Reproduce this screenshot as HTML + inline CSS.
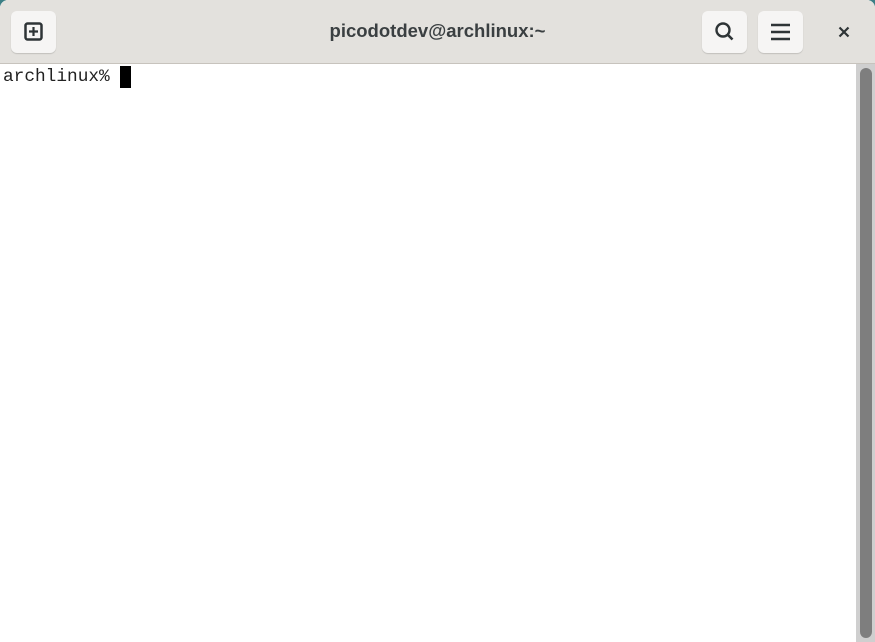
<html><head><style>
body{margin:0;width:875px;height:642px;overflow:hidden;background:#3c7f86;font-family:"Liberation Sans",sans-serif;position:relative}
.win{position:absolute;left:0;top:0;width:875px;height:642px;border-radius:8px 8px 0 0;overflow:hidden;background:#fff}
.hdr{position:absolute;left:0;top:0;width:875px;height:63px;background:#e3e1dd;border-bottom:1px solid #c7c3bd}
.btn{position:absolute;top:11px;width:45px;height:42px;background:#f6f5f4;border-radius:6px;box-shadow:0 1px 1px rgba(0,0,0,.15)}
.title{position:absolute;left:0;width:875px;top:20px;text-align:center;font-size:18.5px;font-weight:bold;color:#3a3f41}
.term{position:absolute;left:3px;top:67px;font-family:"Liberation Mono","DejaVu Sans Mono",monospace;font-size:17.8px;color:#222}
.cur{position:absolute;left:120px;top:66px;width:11px;height:22px;background:#000}
.trough{position:absolute;left:856px;top:64px;width:19px;height:578px;background:#cfcfcf}
.thumb{position:absolute;left:860px;top:68px;width:12px;height:570px;background:#7e7e7e;border-radius:6px}
</style></head><body><div class="win">
<div class="hdr">
<div class="btn" style="left:11px"><svg width="45" height="42"><rect x="14.5" y="12.5" width="16" height="16" rx="2" fill="none" stroke="#2e3436" stroke-width="2.5"/><path d="M22.5 16v9M18 20.5h9" stroke="#2e3436" stroke-width="2.2"/></svg></div>
<div class="title">picodotdev@archlinux:~</div>
<div class="btn" style="left:702px"><svg width="45" height="42"><circle cx="21" cy="19" r="6.5" fill="none" stroke="#2e3436" stroke-width="2.4"/><path d="M25.5 23.5l5 5" stroke="#2e3436" stroke-width="2.6"/></svg></div>
<div class="btn" style="left:758px"><svg width="45" height="42"><path d="M13 14h19M13 21h19M13 28h19" stroke="#2e3436" stroke-width="2.6"/></svg></div>
<svg style="position:absolute;left:836px;top:24px" width="16" height="16"><path d="M3.5 3.5l9 9M12.5 3.5l-9 9" stroke="#2e3436" stroke-width="2.2"/></svg>
</div>
<div class="term">archlinux%</div><div class="cur"></div>
<div class="trough"></div><div class="thumb"></div>
</div></body></html>
